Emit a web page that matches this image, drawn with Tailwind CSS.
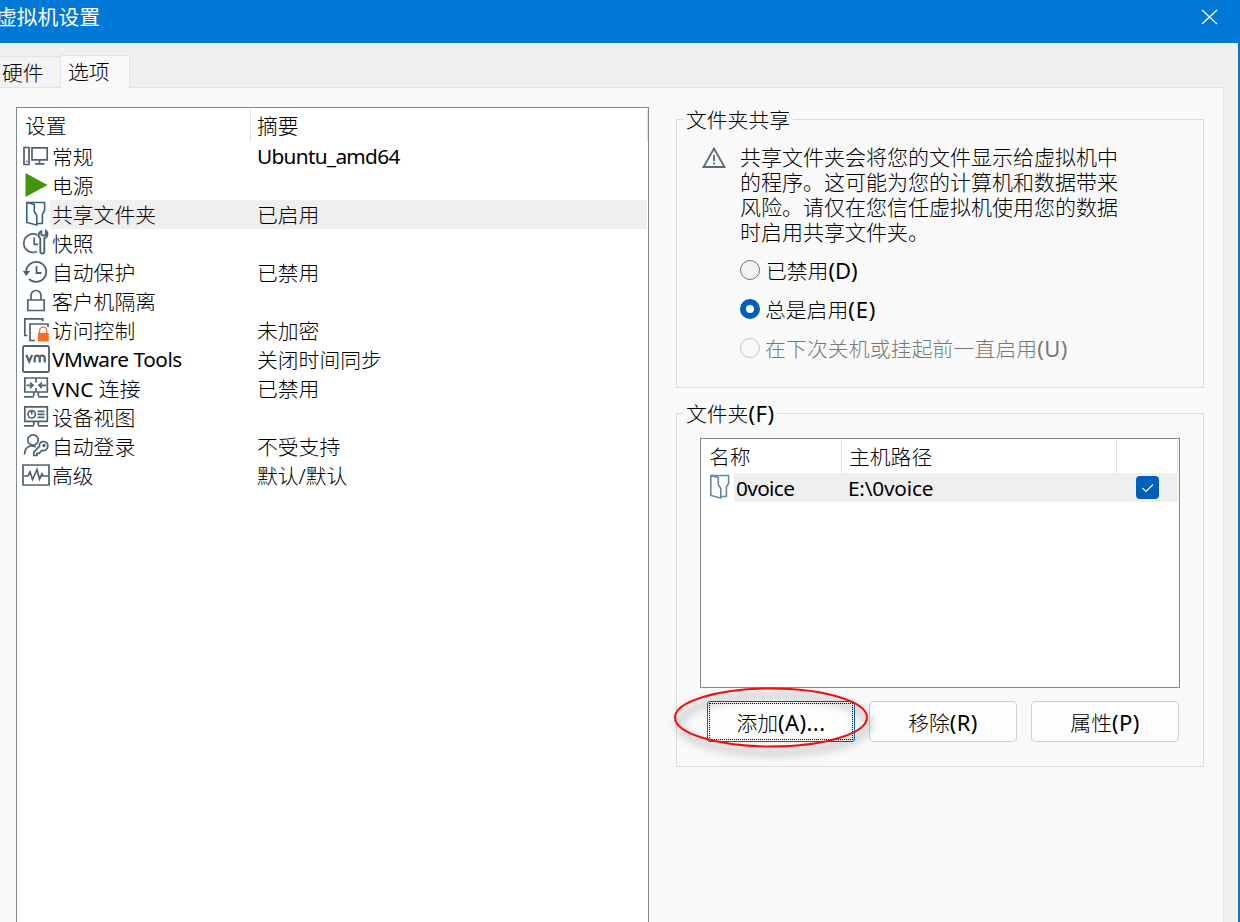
<!DOCTYPE html>
<html lang="zh-CN">
<head>
<meta charset="utf-8">
<title>虚拟机设置</title>
<script src="https://cdn.jsdelivr.net/npm/@tailwindcss/browser@4"></script>
</head>
<body class="w-[1240px] h-[922px] overflow-hidden flex flex-col bg-[#efefef] text-black text-[20.8px] leading-[29px] font-light font-['Noto_Sans','Noto_Sans_CJK_SC',sans-serif] whitespace-nowrap">

<header class="h-[43px] shrink-0 bg-[#0078d7] text-white flex justify-between items-start pr-[22px] overflow-hidden">
  <h1 class="-ml-1 mt-[3px] font-normal">虚拟机设置</h1>
  <svg class="mt-[9px] w-[17px] h-4" viewBox="0 0 17 16" fill="none" stroke="#fff" stroke-width="1.3"><path d="M1 1l15 14M16 1L1 15"/></svg>
</header>

<main class="h-[879px] flex flex-col border-r-2 border-[#0078d7] pr-[14px]">
  <nav class="h-[44px] shrink-0 flex items-end">
    <div class="h-[31px] w-[60px] bg-[#f3f3f3] border-t border-[#e3e3e3] pl-[2px] pt-[2px]">硬件</div>
    <div class="h-[33px] w-[70px] bg-[#f9f9f9] border-t border-x border-[#e3e3e3] pl-[7px] pt-[2px] -mb-px z-10">选项</div>
  </nav>

  <section class="flex-1 flex bg-[#f9f9f9] border-t border-r border-[#e3e3e3] pt-[19px] pl-4 overflow-hidden">
    <div class="w-[633px] h-[900px] shrink-0 bg-white border border-[#828790]">
      <div class="h-[34px] flex pt-px">
        <div class="w-[234px] border-r border-[#e3e3e3] pl-2 pt-[3px]">设置</div>
        <div class="flex-1 pl-[6px] pt-[3px] border-r border-[#e3e3e3]">摘要</div>
      </div>

      <div class="leading-[31px]">
      <div class="flex h-[29px]"><div class="w-[33px] pl-[5px]"><svg class="w-7 h-7" viewBox="0 0 28 28" fill="none" stroke="#4d626e" stroke-width="1.7"><path d="M2 5.5h5v17H2zM10 5.8h15.2v12H10zM17.500 18v3.500M13 21.800h9.500"/><path d="M4 19.500h1.500"/></svg></div><div class="w-[201px] pl-[2px]">常规</div><div class="pl-[6px] font-normal tracking-[-0.7px] leading-[29px]">Ubuntu_amd64</div></div>

      <div class="flex h-[29px]"><div class="w-[33px] pl-[5px]"><svg class="w-7 h-7" viewBox="0 0 28 28"><path d="M3.500 2v24l22-12z" fill="#43950c"/></svg></div><div class="pl-[2px]">电源</div></div>

      <div class="flex h-[29px]"><div class="w-[33px] pl-[5px]"><svg class="w-7 h-7" viewBox="0 0 28 28" fill="none" stroke="#346184" stroke-width="1.6"><path d="M4.800 2.500h17.800v8l-2.200 3.500v9.500h-5M4.800 2.500v20l10 2.500V15.500l-2.500-4V4.500z"/></svg></div><div class="flex flex-1 h-[29px] bg-[#efefef] mr-px"><div class="w-[201px] pl-[2px]">共享文件夹</div><div class="pl-[6px]">已启用</div></div></div>

      <div class="flex h-[29px]"><div class="w-[33px] pl-[5px]"><svg class="w-7 h-7" viewBox="0 0 28 28" fill="none" stroke="#4d626e" stroke-width="1.700"><path d="M15.500 6.200A9.200 9.200 0 1 0 15 22.500M12.200 8.500v6.800h4"/><path d="M19.300 2.200c-3 1-3.700 5-1 7.200V22.500c0 2.800 4 2.800 4 0V9.400c3.900-1.600 4-6 1.600-7.600V5.600l-2.200 1.200-2.400-1.200z" stroke-width="1.900"/></svg></div><div class="pl-[2px]">快照</div></div>

      <div class="flex h-[29px]"><div class="w-[33px] pl-[5px]"><svg class="w-7 h-7" viewBox="0 0 28 28" fill="none" stroke="#4d626e" stroke-width="1.800"><path d="M4.200 14.500A10 10 0 1 1 7 20.800M14.500 8v7h5"/><path d="M.8 13l3.400 5 4-5z" fill="#4d626e" stroke="none"/></svg></div><div class="w-[201px] pl-[2px]">自动保护</div><div class="pl-[6px]">已禁用</div></div>

      <div class="flex h-[29px]"><div class="w-[33px] pl-[5px]"><svg class="w-7 h-7" viewBox="0 0 28 28" fill="none" stroke="#4d626e" stroke-width="1.700"><path d="M5.800 13h16.400v10.500H5.800zM9 13V8.500a5 5 0 0 1 10 0V13"/></svg></div><div class="pl-[2px]">客户机隔离</div></div>

      <div class="flex h-[29px]"><div class="w-[33px] pl-[5px]"><svg class="w-7 h-7" viewBox="0 0 28 28" fill="none" stroke="#4d626e" stroke-width="1.700"><path d="M5.500 19.500H2.800V2.800h18v2.500M13 24.500H8V8h18v3"/><path d="M17.600 17.500v-2.700a3.600 3.600 0 0 1 7.200 0v2.700" stroke="#ff6a1f" stroke-width="1.300"/><path d="M15.800 17h11v8.500h-11z" fill="#ff6a1f" stroke="none"/></svg></div><div class="w-[201px] pl-[2px]">访问控制</div><div class="pl-[6px]">未加密</div></div>

      <div class="flex h-[29px]"><div class="w-[33px] pl-[5px]"><svg class="w-7 h-7" viewBox="0 0 28 28" fill="none" stroke="#4d626e" stroke-width="1.800"><rect x="1" y="1" width="26" height="26" rx="1.500"/><path d="M4.300 10l2.900 6.500 2.900-6.500M12.700 17.500v-4.500c0-3.200 5-3.200 5 0v4.500M17.700 13c0-3.200 5-3.200 5 0v4.500" stroke-width="2.200"/></svg></div><div class="w-[201px] pl-[2px] font-normal tracking-[-0.45px] leading-[29px]">VMware Tools</div><div class="pl-[6px]">关闭时间同步</div></div>

      <div class="flex h-[29px]"><div class="w-[33px] pl-[5px]"><svg class="w-7 h-7" viewBox="0 0 28 28" fill="none" stroke="#4d626e" stroke-width="1.700"><path d="M2.800 4h22.500v14H2.800zM14 4v4.500M14 14V18M11.800 18v4M16.300 18v4M2 22.800h9.800M16.300 22.800H26M4.500 11.300h6M8 8.500l3 2.800-3 2.800M24 11.300h-6M20 8.500l-3 2.800 3 2.800"/></svg></div><div class="w-[201px] pl-[2px]"><span class="font-normal">VNC</span> 连接</div><div class="pl-[6px]">已禁用</div></div>

      <div class="flex h-[29px]"><div class="w-[33px] pl-[5px]"><svg class="w-7 h-7" viewBox="0 0 28 28" fill="none" stroke="#4d626e" stroke-width="1.700"><path d="M2.800 3.800h22.500v14.500H2.800zM11.800 18.500v4M16.300 18.500v4M2 22.800h9.800M16.300 22.800H26M15.500 8.300h7M15.500 11.300h7M15.500 14.300h7"/><circle cx="9.700" cy="11.300" r="3.700"/><path d="M9.700 7v4.500"/></svg></div><div class="pl-[2px]">设备视图</div></div>

      <div class="flex h-[29px]"><div class="w-[33px] pl-[5px]"><svg class="w-7 h-7" viewBox="0 0 28 28" fill="none" stroke="#4d626e" stroke-width="1.700"><circle cx="11" cy="8" r="5.200"/><path d="M2.500 22.500c0-5 3-8.700 7-8.700 2 0 3 .4 4.300 1.300M17.600 14.200l-5.800 5.900v3.400h3.200v-2.200h2.200l2.500-2.800c6.500 1 8.200-7 3-8.700-3.500-1-6 1.500-5.100 4.400z"/><circle cx="22" cy="13.500" r=".8"/></svg></div><div class="w-[201px] pl-[2px]">自动登录</div><div class="pl-[6px]">不受支持</div></div>

      <div class="flex h-[29px]"><div class="w-[33px] pl-[5px]"><svg class="w-7 h-7" viewBox="0 0 28 28" fill="none" stroke="#4d626e" stroke-width="1.700"><path d="M1 4h26v20H1z"/><path d="M2 15h4l2-4 2.500 7.500L15 8.500l2.500 9.500 2.500-5 1 2h5"/></svg></div><div class="w-[201px] pl-[2px]">高级</div><div class="pl-[6px]">默认/默认</div></div>
      </div>
    </div>

    <div class="ml-[27px] w-[528px] shrink-0">
      <fieldset class="h-[284px] -mt-[3px] border border-[#dcdcdc] pl-[6px]">
        <legend class="pl-[3px] pr-[3px] pt-[2px]">文件夹共享</legend>
        <div class="flex pl-[18px] pt-[10px]">
          <svg class="w-[26px] h-6 mt-px shrink-0" viewBox="0 0 26 24" fill="none" stroke="#566b76" stroke-width="1.800"><path d="M13 2.500L23.500 21H2.500zM13 9v6M13 16.500v2"/></svg>
          <p class="ml-[13px] leading-[25px] text-[21px]">共享文件夹会将您的文件显示给虚拟机中<br>的程序。这可能为您的计算机和数据带来<br>风险。请仅在您信任虚拟机使用您的数据<br>时启用共享文件夹。</p>
        </div>
        <div class="pl-[57px] pt-[5px] flex flex-col">
          <label class="flex items-center h-[39px]"><span class="size-5 rounded-full border border-[#757575] bg-[#f3f3f3] mr-[6px]"></span><span class="pt-[2px]">已禁用<span class="font-normal text-[22px]">(D)</span></span></label>
          <label class="flex items-center h-[39px]"><span class="size-5 rounded-full border-[6px] border-[#005fb8] bg-white mr-[5px]"></span><span class="pt-[2px]">总是启用<span class="font-normal text-[22px] tracking-[0.9px]">(E)</span></span></label>
          <label class="flex items-center h-[39px] text-[#787878]"><span class="size-5 rounded-full border border-[#c5c5c5] mr-[5px]"></span><span class="pt-[2px] tracking-[0.15px]">在下次关机或挂起前一直启用<span class="font-normal text-[22px] tracking-[0.4px]">(U)</span></span></label>
        </div>
      </fieldset>

      <fieldset class="mt-[9px] h-[370px] border border-[#dcdcdc] pl-[23px]">
        <legend class="-ml-[17px] pl-[3px] pr-[2px] pt-[2px]">文件夹<span class="font-normal text-[22px] tracking-[0.5px]">(F)</span></legend>
        <div class="mt-[9px] w-[480px] h-[250px] border border-[#828790] bg-white">
          <div class="h-[34px] pt-px flex">
            <div class="w-[141px] border-r border-[#e3e3e3] pl-2 pt-[3px]">名称</div>
            <div class="w-[275px] border-r border-[#e3e3e3] pl-[7px] pt-[3px]">主机路径</div>
            <div class="w-[61px] border-r border-[#e3e3e3]"></div>
          </div>
          <div class="h-[29px] flex">
            <div class="w-[33px] pl-[5px]"><svg class="w-7 h-7" viewBox="0 0 28 28" fill="none" stroke="#6688a2" stroke-width="1.600"><path d="M4.800 2.500h17.800v8l-2.200 3.500v9.500h-5M4.800 2.500v20l10 2.500V15.500l-2.500-4V4.500z"/></svg></div>
            <div class="w-[444px] bg-[#efefef] flex items-center font-normal">
              <span class="w-[114px] pl-[2px] pt-[2px] tracking-[-0.65px]">0voice</span><span class="w-[288px] pt-[2px] tracking-[-0.2px]">E:\0voice</span>
              <span class="size-[23px] rounded-[4px] bg-[#005fb8]"><svg class="size-[23px]" viewBox="0 0 23 23" fill="none" stroke="#fff" stroke-width="1.100"><path d="M6.500 12l3.500 3.500L17 8.500"/></svg></span>
            </div>
          </div>
        </div>
        <div class="relative flex gap-[14px] pl-[7px] pt-[13px]">
          <button class="w-[148px] h-[41px] rounded-[3px] border border-[#0067b8] bg-[#fdfdfd] p-px"><span class="block h-full border border-dotted border-black leading-[37px]">添加<span class="font-normal text-[22px] tracking-[0.4px]">(A)...</span></span></button>
          <button class="w-[148px] h-[41px] rounded-[4px] border border-[#cfcfcf] bg-[#fdfdfd] leading-[41px]">移除<span class="font-normal text-[22px] tracking-[0.4px]">(R)</span></button>
          <button class="w-[148px] h-[41px] rounded-[4px] border border-[#cfcfcf] bg-[#fdfdfd] leading-[41px]">属性<span class="font-normal text-[22px] tracking-[0.4px]">(P)</span></button>
          <svg class="absolute -left-[36px] -top-[10px] w-[220px] h-[90px] pointer-events-none" viewBox="0 0 220 90" fill="none">
            <defs><filter id="soft" x="-20%" y="-30%" width="140%" height="170%"><feGaussianBlur stdDeviation="4.500"/></filter></defs>
            <ellipse cx="110" cy="46" rx="95" ry="28.500" stroke="#000" stroke-opacity=".24" stroke-width="5" filter="url(#soft)"/>
            <ellipse cx="107" cy="39.500" rx="96" ry="29" stroke="#f60c0c" stroke-width="2"/>
          </svg>
        </div>
      </fieldset>
    </div>
  </section>
</main>
</body>
</html>
